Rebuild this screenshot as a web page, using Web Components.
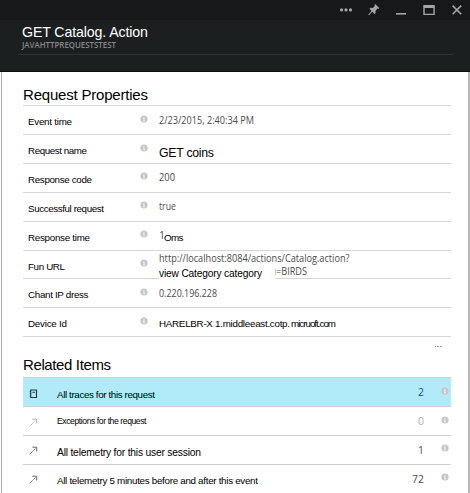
<!DOCTYPE html>
<html lang="en"><head><meta charset="utf-8"><title>Request details</title>
<style>html,body{margin:0;height:100%;overflow:hidden;background:#fff}</style></head>
<body><request-blade></request-blade>
<script>
class BaseElement extends HTMLElement {
  connectedCallback() {
    if (this.shadowRoot) return;
    this.attachShadow({mode: 'open'}).innerHTML = this.render();
    this.ready();
  }
  ready() {}
  num(name, fallback) { return this.hasAttribute(name) ? this.getAttribute(name) : fallback; }
}

/* One line of text: b = baseline offset, w = line width, s = font size */
customElements.define('fit-text', class extends BaseElement {
  render() {
    return `<style>:host{display:block;line-height:0;white-space:nowrap;color:#000;
      font-family:"Liberation Sans",Arial,sans-serif;font-size:${this.num('s', 10)}px}
      :host([seg]){font-family:"Open Sans","Noto Sans",sans-serif;color:#4c4c4c}
      :host([seg]) span{display:inline-block;transform-origin:0 0}
      i{display:inline-block;width:0;height:${this.num('b', 10)}px}</style><i></i><span><slot></slot></span>`;
  }
  ready() {
    const target = +this.num('w', 0), span = this.shadowRoot.querySelector('span');
    const n = this.textContent.length, width = span.getBoundingClientRect().width;
    if (!target || n < 2) return;
    if (this.hasAttribute('seg')) span.style.transform = `scaleX(${target / width})`;
    else span.style.letterSpacing = (target - width) / (n - 1) + 'px';
  }
});

customElements.define('info-dot', class extends BaseElement {
  render() {
    return `<style>:host{display:block;width:8px;height:8px}svg{display:block}</style>
    <svg width="8" height="8" viewBox="0 0 8 8"><circle cx="4" cy="4" r="3.6" fill="#c6c6c6"/>
    <path d="M3.5 1.7h1v1h-1zM3 3.3h1.5v2.3H5v.6H3v-.6h.5V4H3z" fill="#fff" opacity=".85"/></svg>`;
  }
});

customElements.define('window-bar', class extends BaseElement {
  render() {
    return `<style>:host{display:flex;justify-content:flex-end;gap:13.6px;height:19.5px;background:#17181a;box-sizing:border-box;padding:2.6px 6.5px 0 0}
    svg{display:block;width:14px;height:14px;fill:#a3a5a6;stroke:none}</style>
    <svg viewBox="0 0 14 14"><circle cx="2.6" cy="6.9" r="1.6"/><circle cx="7" cy="6.9" r="1.6"/><circle cx="11.5" cy="6.9" r="1.6"/></svg>
    <svg viewBox="0 0 14 14"><path d="M8.2 1l4 4-.9.9-.8-.3-2 2.1.1 2.3-1 1-2.3-2.3L2 12.2l-.7-.1.1-.7 3.1-3.5-2-2.2 1-1 2.4.2 2-2.1-.4-.9z"/></svg>
    <svg viewBox="0 0 14 14"><path d="M2 10h10v1.6H2z"/></svg>
    <svg viewBox="0 0 14 14"><path fill-rule="evenodd" d="M1.3 2h11.5v10H1.3zM2.7 4.9v5.8h8.7V4.9z"/></svg>
    <svg viewBox="0 0 14 14"><path d="M2.6 2.6l8.6 8.6M11.2 2.6l-8.6 8.6" fill="none" stroke="#a3a5a6" stroke-width="1.6"/></svg>`;
  }
});

customElements.define('blade-header', class extends BaseElement {
  render() {
    return `<style>:host{display:block;height:72px;background:#1c1f20;box-sizing:border-box;border-bottom:1px solid #0c0d0e}
    .t{padding:0 18px 0 22px;height:34.5px}.r{height:1px;background:#303334;margin:0 17px 0 18px}
    fit-text{color:#fff}.sub{color:#85888a;font-weight:600}</style>
    <window-bar></window-bar><div class="t"><fit-text b="16.5" s="14.2" w="126">GET Catalog. Action</fit-text>
    <fit-text class="sub" seg b="11.5" s="8.2" w="94">JAVAHTTPREQUESTSTEST</fit-text></div><div class="r"></div>`;
  }
});

customElements.define('property-row', class extends BaseElement {
  render() {
    return `<style>:host{display:grid;grid-template-columns:111px 20px 1fr;height:28.85px;box-sizing:border-box;
      border-top:1px solid #d6d6d6;padding-left:5px}
      info-dot{margin:8.5px 0 0 .7px}</style>
      <fit-text s="9.8" b="${this.num('b')}" w="${this.num('w')}">${this.num('label')}</fit-text>
      <info-dot></info-dot><div><slot></slot></div>`;
  }
});

const ARROW = '<path d="M.8 8.2L6.4 2.6" stroke="#666" stroke-width="1" stroke-dasharray="1.4 .4"/><path d="M3.4 1.2h4.3v4.2" stroke="#666" stroke-width="1"/>';
const BOOK = '<path d="M1.7 1h5.8v7.5H1.7z" stroke="#263c44" stroke-width="1.2"/><path d="M3.3 3.3h2.8M.7 2.5h1M.7 4.7h1M.7 7h1" stroke="#263c44"/>';
customElements.define('related-row', class extends BaseElement {
  render() {
    return `<style>:host{display:grid;grid-template-columns:28px 1fr auto 9px;height:28.85px;box-sizing:border-box;
      border-top:1px solid #cfd2d3;padding:0 1.5px 0 6px}
      :host([selected]){background:#b1ebfa}
      :host([selected]) .n{color:#2c4a54}
      svg{display:block;margin-top:10.5px;fill:none}
      :host([muted]) svg{opacity:.5}
      :host([muted]) .n{color:#aaa}
      .n{padding-right:16px}info-dot{margin:8.5px 0 0 .5px}</style>
      <svg width="9" height="9" viewBox="0 0 9 9">${this.hasAttribute('selected') ? BOOK : ARROW}</svg>
      <fit-text s="${this.num('s', 10)}" b="${this.num('b')}" w="${this.num('w')}">${this.num('label')}</fit-text>
      <fit-text class="n" seg s="10.4" b="18">${this.num('count')}</fit-text><info-dot></info-dot>`;
  }
});

customElements.define('request-blade', class extends BaseElement {
  render() {
    return `<style>:host{display:flex;flex-direction:column;height:493px;background:#fff}
    main{flex:1;border-left:1px solid #aaa;border-right:2px solid #b8b8b8;margin-left:1px;padding:0 17.5px 0 21px;overflow:hidden}
    .h1{height:33.3px}.h2{height:40.2px}.end{border-top:1px solid #d6d6d6}
    .pair{display:flex}
    .more{display:flex;justify-content:flex-end;gap:1px;padding:8.5px 9px 0 0}
    .more b{width:1.6px;height:1.6px;background:#8ba3aa}
    .cover{background:linear-gradient(transparent 5px,#fff 5px);width:116px;height:19px}
    .tail{border-left:1px solid #ccc;height:6px;margin-top:7px}
    .tail fit-text{margin-top:-7px}</style>
    <blade-header></blade-header><main>
    <div class="h1"><fit-text s="15" b="28" w="125">Request Properties</fit-text></div>
    <property-row label="Event time" b="19" w="44"><fit-text seg s="10.5" b="17.5" w="95">2/23/2015, 2:40:34 PM</fit-text></property-row>
    <property-row label="Request name" b="19" w="59"><fit-text s="12.3" b="22.3" w="55">GET coins</fit-text></property-row>
    <property-row label="Response code" b="18.5" w="64"><fit-text seg s="10.5" b="17" w="16">200</fit-text></property-row>
    <property-row label="Successful request" b="18.5" w="76"><fit-text seg s="10.5" b="17" w="17">true</fit-text></property-row>
    <property-row label="Response time" b="18.5" w="62"><div class="pair"><fit-text seg s="10.5" b="17.5" style="width:5px">1</fit-text><fit-text s="9.8" b="18.5" w="19.5">Oms</fit-text></div></property-row>
    <property-row label="Fun URL" b="18.5" w="37"><fit-text seg s="10.5" b="11" w="190.5">http://localhost:8084/actions/Catalog.action?</fit-text>
      <div class="pair"><div class="cover"><fit-text s="10.2" b="15" w="103">view Category category</fit-text></div><div class="tail"><fit-text seg s="10.5" b="13" w="31">=BIRDS</fit-text></div></div></property-row>
    <property-row label="Chant IP dress" b="18.5" w="60.5"><fit-text seg s="10.5" b="17.5" w="58">0.220.196.228</fit-text></property-row>
    <property-row label="Device Id" b="18.8" w="39"><div class="pair"><fit-text s="9.8" b="18.8" w="131" style="width:132px">HARELBR-X 1.middleeast.cotp.</fit-text><fit-text s="9.8" b="18.8" w="45">micruoft.com</fit-text></div></property-row>
    <div class="end h2"><div class="more"><b></b><b></b><b></b></div><fit-text s="15" b="23" w="88">Related Items</fit-text></div>
    <related-row selected label="All traces for this request" s="9.8" b="19.5" w="98" count="2"></related-row>
    <related-row muted label="Exceptions for the request" s="8.6" b="17" w="89.5" count="0"></related-row>
    <related-row label="All telemetry for this user session" s="10.3" b="20" w="144" count="1"></related-row>
    <related-row label="All telemetry 5 minutes before and after this event" s="9.8" b="19" w="201" count="72"></related-row>
    <div class="end"></div></main>`;
  }
});
</script></body></html>
